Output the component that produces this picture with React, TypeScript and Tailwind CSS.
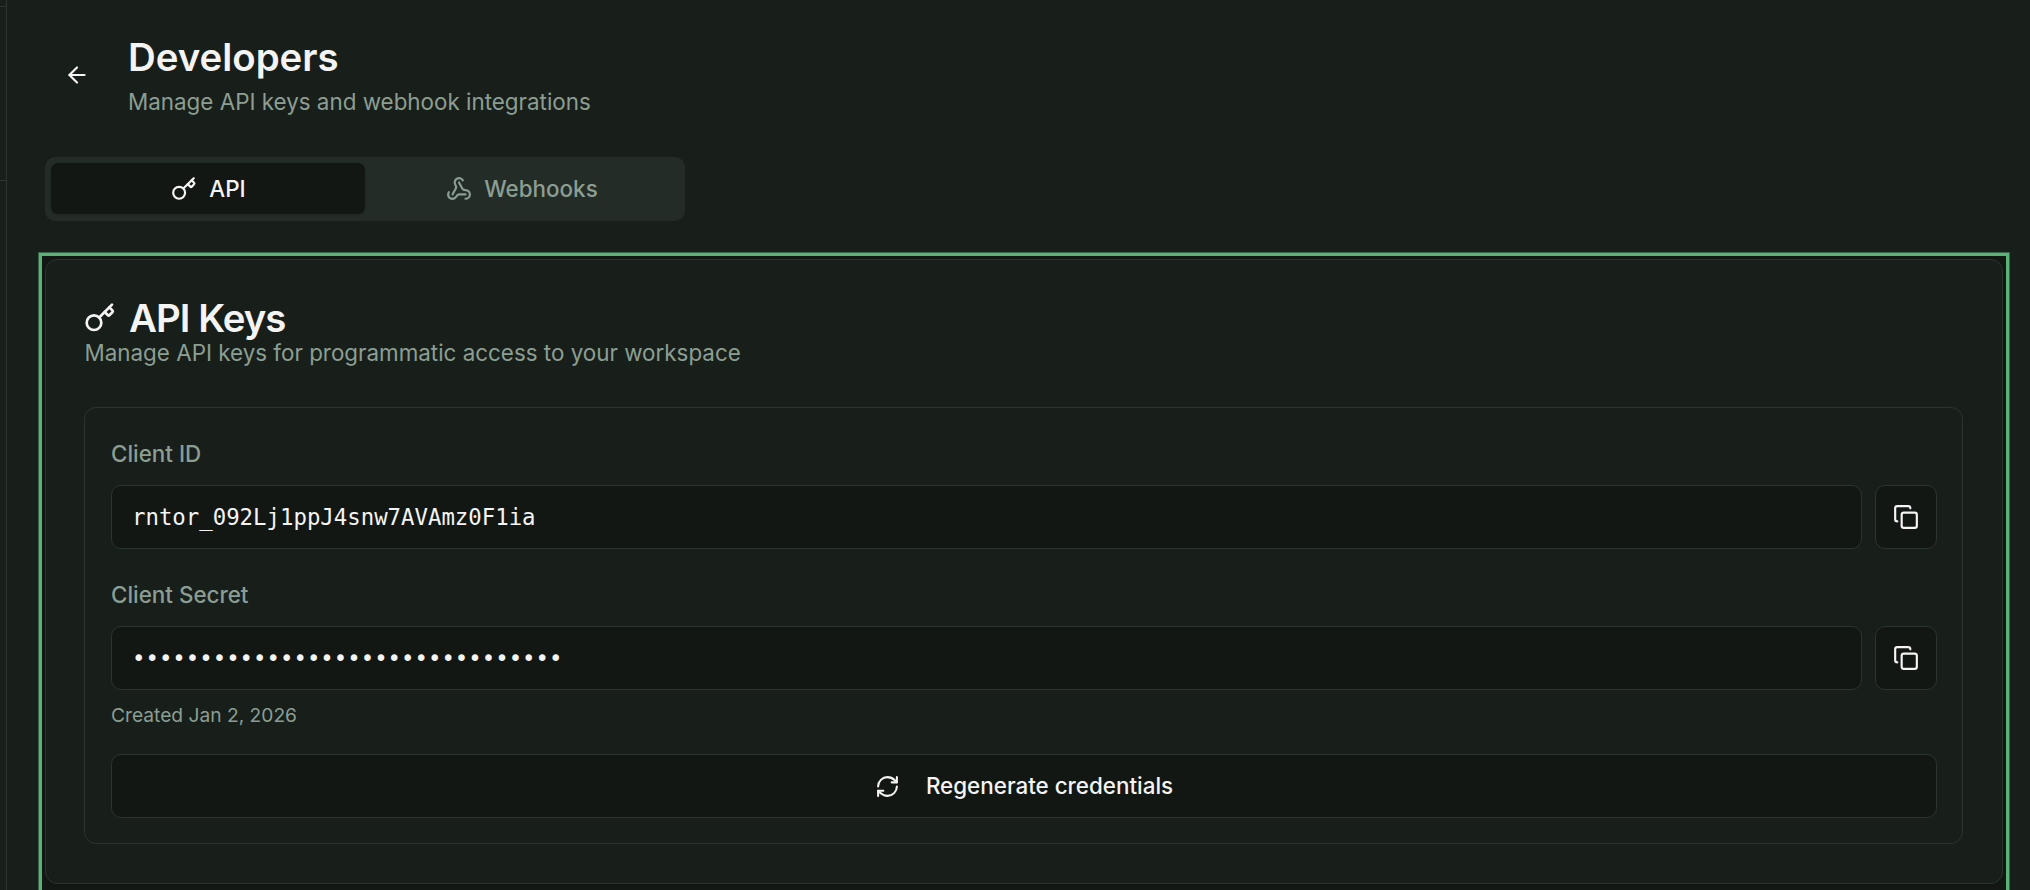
import React from "react";
import { ArrowLeft, Copy, Key, RefreshCw, Webhook } from "lucide-react";

const credentials = [
  { label: "Client ID", value: "rntor_092Lj1ppJ4snw7AVAmz0F1ia" },
  { label: "Client Secret", value: "•".repeat(32) },
];

const Field: React.FC<{ label: string; value: string }> = ({ label, value }) => (
  <div>
    <div className="h-8 text-[22.4px] leading-8 font-medium text-[#8b9e93]">{label}</div>
    <div className="mt-[15px] flex gap-[13px]">
      <div className="flex h-16 flex-1 items-center rounded-[10px] border border-[#2a3530] bg-[#121713] px-5 pt-0.5 font-['DejaVu_Sans_Mono',monospace] text-[22.35px] text-[#f4f4f4]">
        {value}
      </div>
      <button className="flex h-16 w-[62px] items-center justify-center rounded-[10px] border border-[#2a3530] bg-[#121713] text-[#f4f4f4]">
        <Copy size={26} strokeWidth={2} />
      </button>
    </div>
  </div>
);

const App: React.FC = () => (
  <div className="flex h-[890px] w-[2030px] overflow-hidden bg-[#181e1a] font-['Inter',sans-serif] text-[#f4f4f4]">
    {/* Sidebar edge */}
    <aside className="w-[7px] shrink-0 border-r border-[#2a3530]">
      <div className="h-[7px] border-b border-[#2a3530]" />
      <div className="h-[174px] border-b border-[#2a3530]" />
    </aside>

    <main className="flex-1 pr-5 pl-[31px]">
      <header className="flex h-[157px] pt-[35px] pl-[7px]">
        <button className="ml-[19px] flex h-20 w-[26px] items-center justify-center">
          <ArrowLeft size={26} strokeWidth={2} />
        </button>
        <div className="ml-[38px]">
          <h1 className="h-[44px] text-[38.4px] leading-[44px] font-semibold">Developers</h1>
          <p className="mt-[7px] text-[22.4px] leading-8 text-[#8b9e93]">Manage API keys and webhook integrations</p>
        </div>
      </header>

      {/* Tabs */}
      <div className="ml-[7px] flex h-16 w-[640px] rounded-[10px] bg-[#242c28] p-1.5 text-[22.4px] font-medium">
        <div className="flex h-[51px] w-[314px] items-center justify-center gap-3 rounded-[7px] bg-[#121713] pl-px shadow-sm">
          <Key size={26} strokeWidth={2} />
          API
        </div>
        <div className="flex h-[51px] w-[314px] items-center justify-center gap-3 text-[#8b9e93]">
          <Webhook size={26} strokeWidth={2} />
          Webhooks
        </div>
      </div>

      {/* Highlight frame runs past the bottom edge */}
      <div className="mt-[31px] h-[660px] border border-[#38644a]">
        <div className="h-full border-3 border-[#5ab374] bg-[#141815] p-[3px]">
          <section className="h-[625px] rounded-xl border border-[#2a3530] bg-[#181e1a] pt-9 pr-[39px] pl-[38px] shadow-sm">
            <h2 className="flex h-[44px] items-center gap-[13px] text-[38.4px] leading-[44px] font-semibold tracking-[-0.025em]">
              <Key size={32} strokeWidth={2} />
              API Keys
            </h2>
            <p className="-mt-[3px] pl-[0.5px] text-[22.4px] leading-8 text-[#8b9e93]">
              Manage API keys for programmatic access to your workspace
            </p>

            <div className="mt-[38px] h-[437px] rounded-xl border border-[#2a3530] pt-[30px] pr-[25px] pl-[26px]">
              <div className="flex flex-col gap-[30px]">
                {credentials.map((c) => (
                  <Field key={c.label} label={c.label} value={c.value} />
                ))}
              </div>
              <p className="mt-3 text-[19.2px] leading-[26px] text-[#8b9e93]">Created Jan 2, 2026</p>
              <button className="mt-[26px] flex h-16 w-full items-center justify-center gap-[26px] rounded-[10px] border border-[#2a3530] bg-[#121713] text-[22.4px] font-medium">
                <RefreshCw size={25} strokeWidth={2} />
                Regenerate credentials
              </button>
            </div>
          </section>
        </div>
      </div>
    </main>
  </div>
);

export default App;
